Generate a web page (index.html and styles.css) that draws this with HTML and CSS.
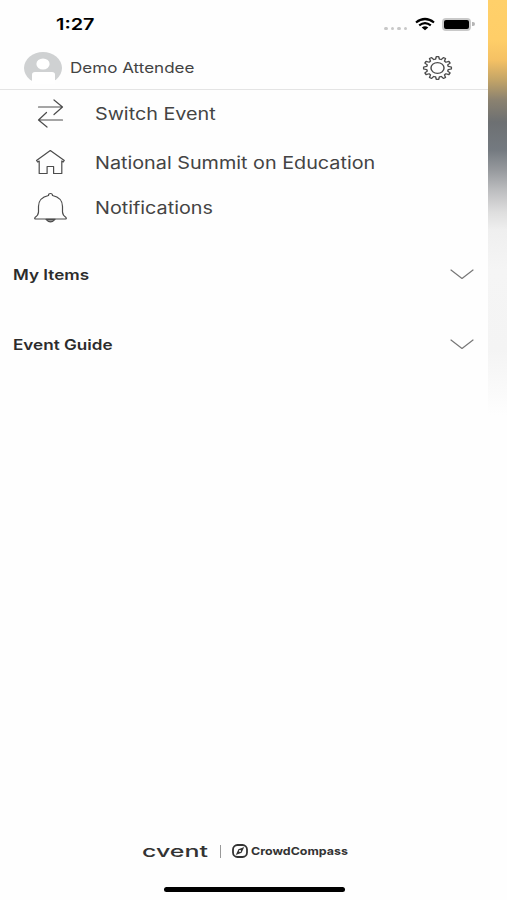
FILE: index.html
```html
<!DOCTYPE html>
<html lang="en">
<head>
    <meta charset="UTF-8">
    <title>Menu</title>
    <link rel="stylesheet" href="styles.css">
</head>
<body>
<div id="all">
    <div class="menu">
        <div class="status">
            <span class="time wide">1:27</span>
            <div class="signals">
                <div class="dots"><i></i><i></i><i></i><i></i></div>
                <svg class="wifi" viewBox="0 0 20 13">
                    <path d="M1 4.5Q10-2.5 19 4.5M4.2 7.4Q10 2.9 15.8 7.4" fill="none" stroke="#000" stroke-width="2.2"/>
                    <path d="M6.7 9.4Q10 6.9 13.3 9.4L10 12.3Z"/>
                </svg>
                <div class="battery"></div>
            </div>
        </div>
        <div class="user">
            <svg class="avatar" viewBox="0 0 38 32" preserveAspectRatio="none">
                <ellipse cx="19" cy="16" rx="19" ry="16" fill="#cfd1d2"/>
                <ellipse cx="19" cy="12" rx="6.6" ry="5.6" fill="#fff"/>
                <path d="M8 32V22.5Q8 20 11 20H28Q31 20 31 22.5V32Z" fill="#fff"/>
            </svg>
            <span class="name wide">Demo Attendee</span>
            <svg class="gear" viewBox="-12 -12 24 24" preserveAspectRatio="none">
                <path d="M-1-11.46L1-11.46 1.56-8.86 3.08-8.46 4.86-10.42 6.6-9.42 5.79-6.89 6.89-5.79 9.42-6.6 10.42-4.86 8.46-3.08 8.86-1.56 11.46-1 11.46 1 8.86 1.56 8.46 3.08 10.42 4.86 9.42 6.6 6.89 5.79 5.79 6.89 6.6 9.42 4.86 10.42 3.08 8.46 1.56 8.86 1 11.46-1 11.46-1.56 8.86-3.08 8.46-4.86 10.42-6.6 9.42-5.79 6.89-6.89 5.79-9.42 6.6-10.42 4.86-8.46 3.08-8.86 1.56-11.46 1-11.46-1-8.86-1.56-8.46-3.08-10.42-4.86-9.42-6.6-6.89-5.79-5.79-6.89-6.6-9.42-4.86-10.42-3.08-8.46-1.56-8.86Z"/>
                <circle r="5.4"/>
            </svg>
        </div>
        <ul>
            <li class="switch">
                <svg viewBox="0 0 34 32"><path d="M5.5 13H29.5M21 6L29.5 13 21 20.5M29.5 26H5.5M13.5 18.5L5.5 26 14 33"/></svg>
                <span class="wide">Switch Event</span>
            </li>
            <li class="home">
                <svg viewBox="0 0 34 32"><path d="M3.5 14.5L17.3 4.5 31.3 14.5 30.2 16 28.8 15V27.5H20.6V20.5H14.1V27.5H6.2V15L4.7 16Z"/></svg>
                <span class="wide">National Summit on Education</span>
            </li>
            <li class="bell">
                <svg viewBox="0 0 34 32"><path d="M15.5 3.5Q15.5 1.5 17.5 1.5T19.5 3.5C26.5 5 29.5 9 29.5 14.5V20Q29.5 23 33 25.5Q34 27 32 27H3Q1 27 2 25.5Q5.5 23 5.5 20V14.5C5.5 9 8.5 5 15.5 3.5Z"/><path class="clapper" d="M13 27.3Q17.5 32.5 22 27.3Z"/></svg>
                <span class="wide">Notifications</span>
            </li>
        </ul>
        <div class="group items">
            <span class="wide">My Items</span>
            <svg viewBox="0 0 24 11"><path d="M1 1L12 9.5 23 1"/></svg>
        </div>
        <div class="group guide">
            <span class="wide">Event Guide</span>
            <svg viewBox="0 0 24 11"><path d="M1 1L12 9.5 23 1"/></svg>
        </div>
        <div class="footer">
            <div class="brand">
                <span class="cvent wide">cvent</span>
                <span class="line"></span>
                <svg viewBox="0 0 16 14"><rect x="1" y="1" width="14" height="12" rx="4.5" fill="none" stroke="#333" stroke-width="1.8"/><path d="M12.2 3L9.6 8.8 3.8 11 6.4 5.2Z" fill="#333"/><circle cx="8" cy="7" r="1.1" fill="#fff"/></svg>
                <span class="crowd wide">CrowdCompass</span>
            </div>
            <div class="bar"></div>
        </div>
    </div>
    <div class="page"></div>
</div>
</body>
</html>
```

FILE: styles.css
```css
*{
    margin: 0;
    padding: 0;
    box-sizing: border-box;
}
body{
    font-family: Inter, "Liberation Sans", sans-serif;
    color: #444;
    background: #fefefe;
}
ul{
    list-style: none;
}
svg{
    display: block;
    flex: none;
    overflow: visible;
}
#all{
    display: flex;
    width: 507px;
    height: 900px;
    overflow: hidden;
}
.menu{
    display: flex;
    flex-direction: column;
    width: 488px;
}
.page{
    flex: 1;
    background: linear-gradient(#ffd06a 0, #ffce68 40px, #f5c164 60px, #c3a467 80px, #8b8270 100px, #6d7072 122px, #747a80 150px, #96999d 170px, #bcbdbf 190px, #dedede 212px, #efefef 230px, #f5f5f5 270px, #f4f4f4 350px, #fafafa 390px, #fefefe 415px);
}
/* stretched lettering */
.wide{
    display: inline-block;
    white-space: nowrap;
    transform: scaleX(1.18);
    transform-origin: 0 50%;
}
.status{
    display: flex;
    justify-content: space-between;
    align-items: center;
    height: 48px;
    padding: 0 14px 0 56px;
}
.time{
    font-size: 16px;
    font-weight: 600;
    color: #000;
    transform: scaleX(1.24);
}
.signals{
    display: flex;
    align-items: center;
}
.dots{
    display: flex;
    gap: 3px;
    margin: 9px 8px 0 0;
}
.dots i{
    width: 3.5px;
    height: 3.5px;
    border-radius: 50%;
    background: #c8c8c8;
}
.wifi{
    width: 20px;
    height: 13px;
    margin-right: 7px;
}
.battery{
    position: relative;
    width: 29px;
    height: 13px;
    margin-right: 3px;
    border: 2.5px solid #c9c9c9;
    border-radius: 4px;
    background: #000;
}
.battery:after{
    content: "";
    position: absolute;
    right: -6px;
    top: 2px;
    width: 3px;
    height: 4px;
    border-radius: 0 2px 2px 0;
    background: #b5b5b5;
}
.user{
    display: flex;
    align-items: center;
    height: 42px;
    padding: 0 36px 2px 24px;
    border-bottom: 1px solid #e4e4e4;
}
.avatar{
    width: 38px;
    height: 32px;
}
.name{
    margin-left: 8px;
    font-size: 14.5px;
    transform: scaleX(1.175);
}
.gear{
    width: 29px;
    height: 24px;
    margin-left: auto;
}
.gear, li svg, .group svg{
    fill: none;
    stroke: #4c4c4c;
    stroke-width: 1.2;
    stroke-linejoin: round;
    stroke-linecap: round;
}
li{
    display: flex;
    align-items: center;
    padding-left: 33px;
    font-size: 17px;
}
li svg{
    width: 34px;
    height: 32px;
    margin-right: 28px;
}
li .wide{
    transform: scaleX(1.163);
}
.switch{
    height: 48px;
}
.switch svg{
    margin-top: -8px;
}
.home{
    height: 50px;
}
.home svg{
    margin-top: -3px;
}
.bell{
    height: 40px;
}
.clapper{
    fill: #999;
}
.group{
    display: flex;
    justify-content: space-between;
    align-items: center;
    height: 70px;
    padding: 0 14px 0 13px;
    font-size: 14.5px;
    font-weight: 600;
    color: #2c2c2c;
}
.group svg{
    width: 24px;
    height: 11px;
    stroke: #777;
}
.items{
    margin-top: 11px;
}
.footer{
    margin-top: auto;
}
.brand{
    display: flex;
    align-items: center;
    height: 20px;
    padding-left: 142px;
    color: #333;
}
.cvent{
    width: 78px;
    font-size: 16px;
    font-weight: 500;
    transform: scaleX(1.56);
}
.line{
    width: 1px;
    height: 13px;
    margin-right: 11px;
    background: #999;
}
.brand svg{
    width: 16px;
    height: 14px;
    margin-right: 3px;
}
.crowd{
    font-size: 11px;
    font-weight: 700;
    transform: scaleX(1.13);
}
.bar{
    width: 181px;
    height: 5px;
    margin: 26px 0 8px 164px;
    border-radius: 3px;
    background: #000;
}
```
